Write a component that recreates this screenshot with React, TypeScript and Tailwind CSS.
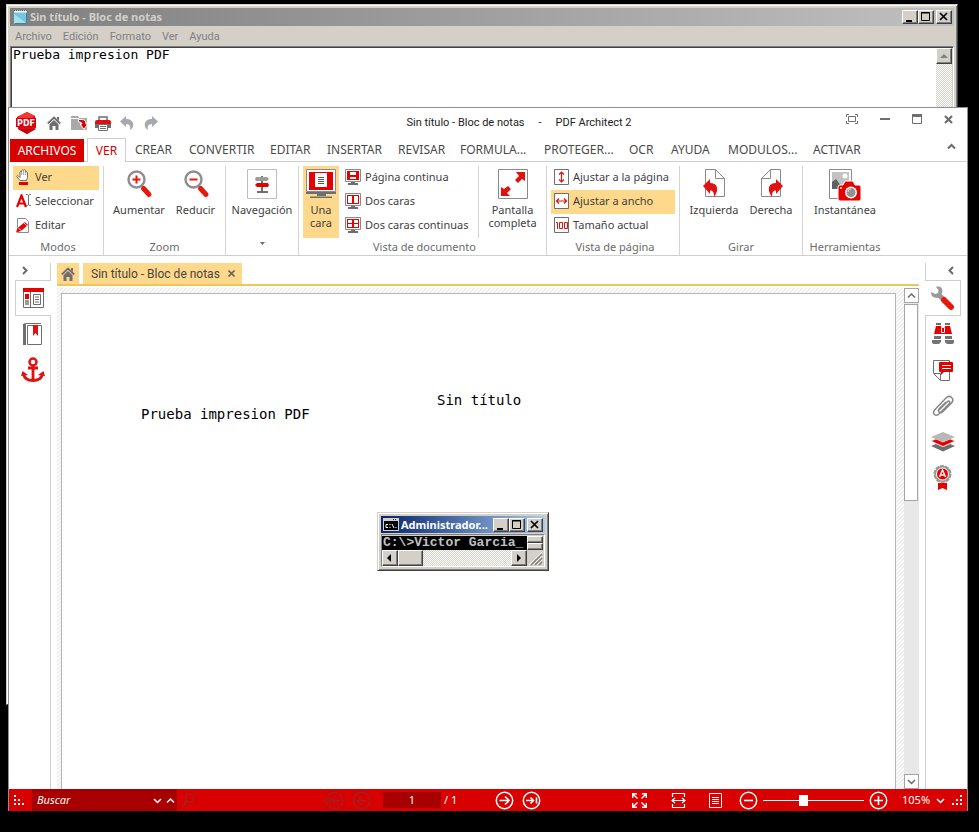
import React from "react";

type Kids = { children?: React.ReactNode };

const UI = "font-['Noto_Sans','Segoe_UI',sans-serif]";
const NARROW = "font-['Roboto','Tahoma',sans-serif]";
const RAISED =
  "bg-[#d4d0c8] border border-t-white border-l-white border-r-[#404040] border-b-[#404040] shadow-[inset_-1px_-1px_0_#808080]";
const CHECKER =
  "bg-[repeating-conic-gradient(#d4d0c8_0_25%,#ffffff_0_50%)] bg-[length:2px_2px]";

function Svg({ w, h, children }: Kids & { w: number; h: number }) {
  return (
    <svg width={w} height={h} viewBox={`0 0 ${w} ${h}`} fill="none" className="block shrink-0" aria-hidden="true">
      {children}
    </svg>
  );
}

function Chevron({ dir, color = "#6a6a6a", weight = 2 }: { dir: "up" | "down" | "left" | "right"; color?: string; weight?: number }) {
  const d = {
    up: "M1 6.5 4.5 3 8 6.5",
    down: "M1 3 4.5 6.5 8 3",
    left: "M6 1 2.5 4.5 6 8",
    right: "M3 1 6.5 4.5 3 8",
  }[dir];
  return (
    <Svg w={9} h={9}>
      <path d={d} stroke={color} strokeWidth={weight} />
    </Svg>
  );
}

/* ---------- classic window chrome ---------- */

function ClassicControls() {
  return (
    <div className="flex shrink-0 items-center">
      <button aria-label="Minimizar" className={`${RAISED} h-3.5 w-4`}>
        <Svg w={14} h={12}><path d="M3 9h6v2H3z" fill="#000" /></Svg>
      </button>
      <button aria-label="Maximizar" className={`${RAISED} h-3.5 w-4`}>
        <Svg w={14} h={12}><path d="M2.5 1.5h8v8h-8zM2 2h9" stroke="#000" /></Svg>
      </button>
      <button aria-label="Cerrar" className={`${RAISED} ml-0.5 h-3.5 w-4`}>
        <Svg w={14} h={12}><path d="m3 2 7 7m0-7-7 7" stroke="#000" strokeWidth="1.7" /></Svg>
      </button>
    </div>
  );
}

function Notepad() {
  return (
    <section
      aria-label="Bloc de notas"
      className="absolute top-1 right-[21px] bottom-[127px] left-1.5 flex flex-col border border-t-[#d4d0c8] border-r-[#404040] border-b-[#404040] border-l-[#d4d0c8] bg-[#d4d0c8] p-[3px] shadow-[inset_1px_1px_0_#fff,inset_-1px_-1px_0_#808080]"
    >
      <header className="flex h-[18px] items-center bg-linear-to-r from-[#808080] to-[#c0c0c0] pr-0.5 pl-[3px]">
        <Svg w={15} h={16}>
          <path d="M1 3h12l1 12H1z" fill="#74c7df" />
          <path d="m1 5 12 9H1z" fill="#a5e0ee" />
          <path d="M13.500 3v11.500H2" stroke="#477f97" />
          <path d="M1 2.5h13" stroke="#f4f6f6" strokeWidth="2" />
          <path d="M1 1.500h13" stroke="#58666b" strokeDasharray="1 1" />
        </Svg>
        <h1 className={`${UI} ml-0.5 flex-1 text-[11px] leading-4 font-bold text-[#d4d0c8]`}>
          Sin título - Bloc de notas
        </h1>
        <ClassicControls />
      </header>
      <nav className={`${NARROW} flex h-5 items-center gap-[11px] px-[5px] pt-0.5 text-[11px] leading-4 text-[#808080]`}>
        {["Archivo", "Edición", "Formato", "Ver", "Ayuda"].map((m) => (
          <button key={m}>{m}</button>
        ))}
      </nav>
      <div className="flex flex-1 border border-t-[#808080] border-r-white border-b-white border-l-[#808080] shadow-[inset_1px_1px_0_#404040]">
        <textarea
          aria-label="Texto"
          defaultValue="Prueba impresion PDF"
          className="m-px mr-0 flex-1 resize-none bg-white pl-px font-['DejaVu_Sans_Mono',monospace] text-[13px] leading-[14px] text-black outline-none"
        />
        <div className={`${CHECKER} mt-px mr-px w-4`}>
          <div className={`${RAISED} flex h-4 items-center justify-center`}>
            <Svg w={8} h={5}><path d="m0 4 4-4 4 4z" fill="#808080" /></Svg>
          </div>
        </div>
      </div>
    </section>
  );
}

function Console() {
  return (
    <section
      aria-label="Administrador"
      className="absolute top-[512px] left-[377px] flex h-[59px] w-[172px] flex-col border border-t-[#d4d0c8] border-r-[#404040] border-b-[#404040] border-l-[#d4d0c8] bg-[#d4d0c8] p-[3px] shadow-[inset_1px_1px_0_#fff,inset_-1px_-1px_0_#808080]"
    >
      <header className="flex h-[18px] items-center bg-linear-to-r from-[#0a246a] to-[#a6caf0] pr-0.5 pl-0.5">
        <Svg w={16} h={13}>
          <path d="M0 0h16v13H0z" fill="#d4d0c8" />
          <path d="M1 3h14v9H1z" fill="#000" />
          <path d="M5 6.500H3v3h2M7 6v1m0 2v1m2-4 2 4m2-1v1" stroke="#fff" />
          <path d="M10 1.500h1m1 0h1" stroke="#333" />
        </Svg>
        <h2 className={`${UI} ml-0.5 w-[93px] text-[11px] leading-4 font-bold whitespace-nowrap text-white`}>
          Administrador...
        </h2>
        <div className="ml-auto"><ClassicControls /></div>
      </header>
      <div className="mt-px flex flex-1 flex-col border border-t-[#808080] border-r-white border-b-white border-l-[#808080] pt-px pr-px">
        <div className="flex h-3.5">
          <pre className="flex-1 overflow-hidden bg-black pl-px font-['Liberation_Mono',monospace] text-[13px] leading-[14px] font-bold text-[#c0c0c0]">
            {"C:\\>Victor Garcia_"}
          </pre>
          <div className="flex w-4 shrink-0 flex-col">
            <div className={`${RAISED} h-[7px]`} />
            <div className={`${RAISED} h-[7px]`} />
          </div>
        </div>
        <div className={`${CHECKER} flex flex-1`}>
          <button aria-label="Izquierda" className={`${RAISED} w-4`}>
            <Svg w={14} h={14}><path d="M8 3v8L4 7z" fill="#000" /></Svg>
          </button>
          <div className={`${RAISED} w-[25px]`} />
          <button aria-label="Derecha" className={`${RAISED} ml-auto w-4`}>
            <Svg w={14} h={14}><path d="M5 3v8l4-4z" fill="#000" /></Svg>
          </button>
          <div className="w-4 bg-[#d4d0c8] pl-px">
            <Svg w={15} h={16}>
              <path d="M3 15 14 4m-7 11 7-7m-3 7 3-3" stroke="#808080" strokeWidth="1.500" />
              <path d="M1 15 14 2m-9 13 9-9m-5 9 5-5" stroke="#fff" />
            </Svg>
          </div>
        </div>
      </div>
    </section>
  );
}

/* ---------- icons of the PDF window ---------- */

const HomeIcon = () => (
  <Svg w={14} h={14}>
    <path d="M.8 7.500 7 1.500l6.200 6" stroke="#6e6e6e" strokeWidth="1.800" />
    <path d="M10 1h2v4l-2-2z" fill="#6e6e6e" />
    <path d="M2.500 8.300 7 4l4.500 4.300V14H8.500v-4h-3v4h-3z" fill="#6e6e6e" />
  </Svg>
);

const Logo = () => (
  <Svg w={22} h={22}>
    <path d="M12 0 20 4l1 12-9 6-9-5L2 5z" fill="#e30b13" />
    <path d="m2 5 10-5 8 4-8 4z" fill="#f23a35" />
    <path d="M3 17h18l-9 5z" fill="#c90009" />
    <path d="M1 6h20v9H1z" fill="#d9000b" />
    <text x="11" y="14" textAnchor="middle" fontFamily="DejaVu Sans" fontWeight="bold" fontSize="8" fill="#fff">PDF</text>
  </Svg>
);

const FolderIcon = () => (
  <Svg w={17} h={16}>
    <path d="M0 1h7l1.500 2H16v12H0z" fill="#a9a9a9" />
    <path d="M0 3.500h8" stroke="#fff" />
    <path d="M7.500 4.500H11q4 0 4 4.500h1.500L13 14.500 9 9h2q0-2-3.500-2z" fill="#d90008" stroke="#fff" />
  </Svg>
);

const PrinterIcon = () => (
  <Svg w={16} h={15}>
    <path d="M4 5V1h8v4" stroke="#6e6e6e" strokeWidth="1.500" />
    <path d="M0 8V6q0-2 2-2h12q2 0 2 2v2z" fill="#e30b13" />
    <path d="M0 8h16v4H0z" fill="#6e6e6e" />
    <path d="M3.500 8.500h9v6h-9zM5 10.500h6M5 12.500h6" fill="#fff" stroke="#6e6e6e" />
  </Svg>
);

const UndoIcon = ({ flip = false }: { flip?: boolean }) => (
  <Svg w={14} h={14}>
    <path
      d="M0 5.500 6 0v3c5 0 9 3 6.500 9L10 14c1-4-.5-6-4-6v3z"
      fill="#a5a9b0"
      transform={flip ? "translate(14 0) scale(-1 1)" : undefined}
    />
  </Svg>
);

const HandIcon = () => (
  <Svg w={14} h={16}>
    <path
      d="M4 11.500 1 8C.3 7 1.500 6 2.500 7L4 8.500V3q.800-1.400 1.600 0V1.500q1-1.400 2 0V1q1.200-1 2 .7V3q1.500-1 1.900.6V8.500L10.500 11.500z"
      fill="#fff"
      stroke="#6e6e6e"
    />
    <path d="M5.700 3v3m2-4.500V6m2-3.500V6" stroke="#8a8a8a" strokeWidth=".8" />
    <path d="M3 13h9v3H3z" fill="#e60000" />
  </Svg>
);

const SelectIcon = () => (
  <Svg w={15} h={14}>
    <path d="M1 13 5.500 1.500 10 13M2.500 9.500h6" stroke="#e60000" strokeWidth="2.200" />
    <path d="M10 .5h1.500l1 1 1-1H15M12.500 1v10M10 11.500h1.500l1-1 1 1H15" stroke="#6e6e6e" />
  </Svg>
);

const EditIcon = () => (
  <Svg w={14} h={15}>
    <path d="M1.500.5h8l3 3v11h-11z" stroke="#8a8a8a" fill="#fff" />
    <path d="M0 14.500 1.500 10 9 4l3 3-7 6z" fill="#e60000" />
    <path d="m8 5 3 3M2 9.500 5.500 13" stroke="#fff" strokeWidth=".8" />
  </Svg>
);

const ZoomIcon = ({ plus }: { plus?: boolean }) => (
  <Svg w={28} h={30}>
    <circle cx="11.500" cy="10.500" r="8" stroke="#8e8e8e" strokeWidth="2.400" fill="#fff" />
    <path d="m18.500 19.500 5.500 6" stroke="#e31b0c" strokeWidth="5" strokeLinecap="round" />
    <path d="M7.500 10.500h8" stroke="#e31b0c" strokeWidth="2" />
    {plus && <path d="M11.500 6.500v8" stroke="#e31b0c" strokeWidth="2" />}
  </Svg>
);

const NavIcon = () => (
  <Svg w={30} h={30}>
    <path d="M.5.5h29v29H.5z" stroke="#b9bdc4" fill="#fff" />
    <path d="M15 7v16M10 23h11" stroke="#6e6e6e" strokeWidth="2" />
    <path d="M9 8h11l2 2-2 2H9l-1-2z" fill="#9c9c9c" />
    <path d="M10 14h11l1 2-1 2H10l-2-2z" fill="#e60000" />
  </Svg>
);

const BigMonitor = () => (
  <Svg w={30} h={29}>
    <path d="M.5.5h29v22H.5z" fill="#fff" stroke="#8a8a8a" />
    <path d="M3 3h24v18H3z" fill="#e60000" />
    <path d="M9 4h12v14H9z" fill="#fff" />
    <path d="M12 8.500h6m-6 2h6m-6 2h6m-6 2h6" stroke="#555" />
    <path d="M0 23h30v2H0zM11 25h9v2h-9zM4 27.500h22V29H4z" fill="#6e6e6e" />
  </Svg>
);

const Monitor = ({ kind }: { kind: "cont" | "two" | "twocont" }) => (
  <Svg w={16} h={16}>
    <path d="M.5.5h15v12H.5z" fill="#fff" stroke="#8a8a8a" />
    <path d="M2 2h12v9H2z" fill="#e60000" />
    {kind === "cont" && <path d="M5 3h6v3H5zm0 5h6v2H5z" fill="#fff" />}
    {kind === "two" && <path d="M3 3h4v7H3zm6 0h4v7H9z" fill="#fff" />}
    {kind === "twocont" && <path d="M3 3h4v3H3zm6 0h4v3H9zM3 7h4v3H3zm6 0h4v3H9z" fill="#fff" />}
    <path d="M6 13h4v1H6zM3 14h10v2H3z" fill="#6e6e6e" />
  </Svg>
);

const FullIcon = () => (
  <Svg w={30} h={30}>
    <path d="M.5.500h29v29H.5z" stroke="#8a8a8a" fill="#fff" />
    <path d="M18 3h9v9l-3-2-4 4-3-3 4-4zM12 27H3v-9l3 2 4-3 3 3-4 4z" fill="#e31010" />
  </Svg>
);

const FitIcon = ({ kind }: { kind: "page" | "width" | "actual" }) => (
  <Svg w={15} h={16}>
    <path d="M.5.5h14v15H.5z" stroke="#6e6e6e" fill="#fff" />
    {kind === "page" && <path d="M7.500 3v10M5 5.500 7.500 3 10 5.500M5 10.500 7.500 13l2.500-2.500" stroke="#e31010" strokeWidth="1.200" />}
    {kind === "width" && <path d="M2.500 8h10M5 5.500 2.500 8 5 10.500M10 5.500 12.500 8 10 10.500" stroke="#e31010" strokeWidth="1.200" />}
    {kind === "actual" && <path d="M2 5.500h1.500V12M5.500 5.500h3v6h-3zm5 0h3v6h-3z" stroke="#e31010" />}
  </Svg>
);

const RotateIcon = ({ flip = false }: { flip?: boolean }) => (
  <Svg w={23} h={29}>
    <g transform={flip ? "translate(23 0) scale(-1 1)" : undefined}>
      <path d="M2.500.5h10l9 9v18h-19z" fill="#fff" stroke="#8a8a8a" />
      <path d="M12.500.5v9h9" stroke="#8a8a8a" />
      <path d="M0 17 7 10v4c7 0 10 6 4 14 0-5-1-6.500-4-6.500V25z" fill="#e31010" />
    </g>
  </Svg>
);

const SnapshotIcon = () => (
  <Svg w={34} h={33}>
    <path d="M1.500.5h22v29h-22z" fill="#fff" stroke="#8a8a8a" />
    <path d="M4 3h17v17H4z" fill="#c2c2c2" />
    <circle cx="17" cy="7" r="2.500" fill="#fff" />
    <path d="m4 13 4-3 5 7 3-2v5H4z" fill="#5e6266" />
    <path d="M10 18q0-2 2-2h3l2-4h8l2 4h4q2 0 2 2v12q0 2-2 2H12q-2 0-2-2z" fill="#e60000" stroke="#fff" />
    <circle cx="23" cy="23.500" r="6" fill="#fff" />
    <circle cx="23" cy="23.500" r="4.500" fill="#929292" />
    <path d="M20 23q0-3 3-3" stroke="#ddd" />
    <path d="M12 19h2" stroke="#fff" strokeWidth="1.500" />
  </Svg>
);

/* ---------- ribbon ---------- */

function Tool({ icon, label, active, className }: { icon: React.ReactNode; label: string; active?: boolean; className: string }) {
  return (
    <button className={`flex h-6 items-center gap-1 pb-0.5 text-left leading-4 whitespace-nowrap ${active ? "bg-[#fed98b]" : ""} ${className}`}>
      <span className="flex w-4 justify-center">{icon}</span>
      {label}
    </button>
  );
}

function BigTool({ icon, lines, className = "" }: { icon: React.ReactNode; lines: string[]; className?: string }) {
  return (
    <button className={`flex h-[72px] flex-col items-center pt-[3px] leading-[13px] ${className}`}>
      <span className="flex h-[34px] items-start justify-center">{icon}</span>
      {lines.map((line) => (
        <span key={line} className="block h-[13px]">{line}</span>
      ))}
    </button>
  );
}

function Group({ label, className, children }: Kids & { label: React.ReactNode; className: string }) {
  return (
    <div className={`flex shrink-0 flex-col ${className}`}>
      <div className="flex h-[72px]">{children}</div>
      <div className="flex h-[18px] items-end justify-center leading-4 text-[#6b6b6b]">{label}</div>
    </div>
  );
}

const DIVIDED = "border-r border-[#d4d4d4]";

function Ribbon() {
  return (
    <div className="flex h-[94px] overflow-hidden border-b border-[#cfcfcf] pt-1 text-[11px] text-[#3f3f3f]">
      <Group label="Modos" className={`w-[95px] pl-1 ${DIVIDED}`}>
        <div className="flex flex-col">
          <Tool icon={<HandIcon />} label="Ver" active className="w-[86px] pl-0.5" />
          <Tool icon={<SelectIcon />} label="Seleccionar" className="w-[86px] pl-0.5" />
          <Tool icon={<EditIcon />} label="Editar" className="w-[86px] pl-0.5" />
        </div>
      </Group>
      <Group label="Zoom" className={`w-[122px] px-1 ${DIVIDED}`}>
        <BigTool icon={<ZoomIcon plus />} lines={["Aumentar"]} className="w-[62px]" />
        <BigTool icon={<ZoomIcon />} lines={["Reducir"]} className="flex-1" />
      </Group>
      <Group
        label={<span className="pb-2.5"><Svg w={5} h={3}><path d="M0 0h5L2.500 3z" fill="#6e6e6e" /></Svg></span>}
        className={`w-[73px] ${DIVIDED}`}
      >
        <BigTool icon={<NavIcon />} lines={["Navegación"]} className="w-full" />
      </Group>
      <Group label="Vista de documento" className={`w-[248px] pl-1 ${DIVIDED}`}>
        <BigTool icon={<BigMonitor />} lines={["Una", "cara"]} className="w-9 bg-[#fed98b]" />
        <div className={`flex w-[140px] flex-col pl-1.5 ${DIVIDED}`}>
          <Tool icon={<Monitor kind="cont" />} label="Página continua" className="w-full" />
          <Tool icon={<Monitor kind="two" />} label="Dos caras" className="w-full" />
          <Tool icon={<Monitor kind="twocont" />} label="Dos caras continuas" className="w-full" />
        </div>
        <BigTool icon={<FullIcon />} lines={["Pantalla", "completa"]} className="flex-1" />
      </Group>
      <Group label="Vista de página" className={`w-[133px] pl-1 ${DIVIDED}`}>
        <div className="flex flex-col">
          <Tool icon={<FitIcon kind="page" />} label="Ajustar a la página" className="w-[124px] pl-0.5" />
          <Tool icon={<FitIcon kind="width" />} label="Ajustar a ancho" active className="w-[124px] pl-0.5" />
          <Tool icon={<FitIcon kind="actual" />} label="Tamaño actual" className="w-[124px] pl-0.5" />
        </div>
      </Group>
      <Group label="Girar" className={`w-[123px] px-1 ${DIVIDED}`}>
        <BigTool icon={<RotateIcon />} lines={["Izquierda"]} className="w-[60px]" />
        <BigTool icon={<RotateIcon flip />} lines={["Derecha"]} className="flex-1" />
      </Group>
      <Group label="Herramientas" className="w-[84px]">
        <BigTool icon={<SnapshotIcon />} lines={["Instantánea"]} className="w-full" />
      </Group>
    </div>
  );
}

const TABS: [string, string][] = [
  ["CREAR", "w-[54px]"],
  ["CONVERTIR", "w-[81px]"],
  ["EDITAR", "w-[57px]"],
  ["INSERTAR", "w-[71px]"],
  ["REVISAR", "w-[62px]"],
  ["FORMULA...", "w-[84px]"],
  ["PROTEGER...", "w-[85px]"],
  ["OCR", "w-[42px]"],
  ["AYUDA", "w-[57px]"],
  ["MODULOS...", "w-[85px]"],
  ["ACTIVAR", "w-[66px]"],
];

function TitleBar() {
  return (
    <header className="grid h-[30px] grid-cols-[1fr_auto_1fr] items-center">
      <div className="flex items-center gap-2.5 pl-1.5">
        <Logo />
        <button aria-label="Inicio"><HomeIcon /></button>
        <button aria-label="Abrir"><FolderIcon /></button>
        <button aria-label="Imprimir" className="-ml-[3px]"><PrinterIcon /></button>
        <button aria-label="Deshacer" className="-ml-px"><UndoIcon /></button>
        <button aria-label="Rehacer"><UndoIcon flip /></button>
      </div>
      <div className={`${NARROW} flex gap-3.5 pb-px pl-[62px] text-[11px] leading-4 text-[#222]`}>
        <span>Sin título - Bloc de notas</span>
        <span>-</span>
        <span>PDF Architect 2</span>
      </div>
      <div className="flex items-center justify-end gap-[22px] pr-3.5 pb-2">
        <button aria-label="Pantalla completa">
          <Svg w={12} h={10}>
            <path d="M3 .5H.5V3M9 .5h2.500V3M3 9.500H.5V7M9 9.500h2.500V7M2.500 2.500h7v5h-7z" stroke="#6e6e6e" />
          </Svg>
        </button>
        <button aria-label="Minimizar"><Svg w={10} h={10}><path d="M0 4h10v2H0z" fill="#6e6e6e" /></Svg></button>
        <button aria-label="Maximizar"><Svg w={10} h={10}><path d="M.5.5h9v9H.5z" stroke="#6e6e6e" /><path d="M0 0h10v3H0z" fill="#6e6e6e" /></Svg></button>
        <button aria-label="Cerrar"><Svg w={9} h={9}><path d="m1 1 7 7m0-7L1 8" stroke="#6e6e6e" strokeWidth="2.200" /></Svg></button>
      </div>
    </header>
  );
}

function TabBar() {
  return (
    <nav className="flex h-6 items-stretch text-xs leading-4 text-[#4a4a4a] shadow-[inset_0_-1px_0_#cfcfcf]">
      <button className="mr-[3px] ml-px w-[74px] border-t border-white bg-[#d80000] text-white">ARCHIVOS</button>
      <button className="w-[39px] border border-b-0 border-[#cfcfcf] bg-white text-[#d80000]">VER</button>
      {TABS.map(([name, width]) => (
        <button key={name} className={`shrink-0 pl-[9px] text-left whitespace-nowrap ${width}`}>{name}</button>
      ))}
      <button aria-label="Contraer" className="mr-[11px] mb-2 ml-auto"><Chevron dir="up" /></button>
    </nav>
  );
}

/* ---------- side panels ---------- */

const ThumbsIcon = () => (
  <Svg w={21} h={20}>
    <path d="M.5 3.500h20v16H.5zM7.500 4v15" stroke="#6e6e6e" fill="#fff" />
    <path d="M0 0h21v4H0zM2 6h4v5H2z" fill="#e60000" />
    <path d="M2 12h4v5H2z" fill="#9a9a9a" />
    <path d="M10.500 6.500h7v10h-7zM12 9h4m-4 2.500h4M12 14h4" stroke="#6e6e6e" />
  </Svg>
);
const BookIcon = () => (
  <Svg w={20} h={23}>
    <path d="M.5 2.500q0-2 2-2H18" stroke="#6e6e6e" />
    <path d="M4.500 2.500h14v19h-14z" stroke="#6e6e6e" fill="#fff" />
    <path d="M1.500 1v21" stroke="#6e6e6e" strokeWidth="3" />
    <path d="M10 2h5v11l-2.500-3-2.500 3z" fill="#e31010" />
  </Svg>
);
const AnchorIcon = () => (
  <Svg w={24} h={26}>
    <circle cx="12" cy="5" r="3.500" stroke="#e31010" strokeWidth="2.500" />
    <path d="M12 8.500V23M7 11h10M2.500 17c1 5 5 6.500 9.500 6.500S20.500 22 21.500 17" stroke="#e31010" strokeWidth="2.800" />
    <path d="M0 19 1.500 14 7 18zM24 19l-1.500-5L17 18z" fill="#e31010" />
  </Svg>
);
const WrenchIcon = () => (
  <Svg w={25} h={25}>
    <path d="m8 8 5 5" stroke="#9a9a9a" strokeWidth="5" />
    <path d="m14 14 7 7" stroke="#e31b0c" strokeWidth="6" strokeLinecap="round" />
    <path d="M6 1c5-2 8 3 5.500 7L9 11.500C5 13 0 10 1.500 6L5 8l3-1 .5-3z" fill="#9a9a9a" />
  </Svg>
);
const BinocularsIcon = () => (
  <Svg w={22} h={22}>
    <path d="M4 0h5v2H4zm9 0h5v2h-5z" fill="#6e6e6e" />
    <path d="M4 3h5v1h4V3h5l2 8H2z" fill="#e60000" />
    <path d="M9.500 4.500h3v5h-3z" stroke="#fff" />
    <path d="M2 13h7v3H2zm11 0h7v3h-7zM0 17h9v2q-1 2-3 2H3q-3 0-3-2zm13 0h9v2q0 2-3 2h-3q-2 0-3-2z" fill="#747474" />
  </Svg>
);
const CommentIcon = () => (
  <Svg w={22} h={23}>
    <path d="M1.500 1.500h16v20h-9l-7-7zM2 14.500h6.500V21" stroke="#6e6e6e" fill="#fff" />
    <path d="M8 3h12q1 0 1 1v8q0 1-1 1h-8l-3 3v-3H8q-1 0-1-1V4q0-1 1-1z" fill="#e60000" />
    <path d="M10 6.500h9m-9 3h9" stroke="#fff" />
  </Svg>
);
const ClipIcon = () => (
  <Svg w={22} h={22}>
    <path d="m7 15 8-8c2-2 4 0 2 2l-9.500 9.500c-4 4-8 0-4.500-4L14 3c4-4 9 1 5.500 5L11 16.500c-3 3-6 0-3.500-3L14 7" stroke="#858585" strokeWidth="1.500" />
  </Svg>
);
const LayersIcon = () => (
  <Svg w={24} h={20}>
    <path d="m0 14 5-2 7 3 7-3 5 2-12 5.500z" fill="#6e6e6e" />
    <path d="m0 9 5-2 7 3 7-3 5 2-12 5.500z" fill="#e60000" stroke="#fff" strokeWidth=".6" />
    <path d="m0 5 12-5 12 5-12 5z" fill="#b8b8b8" />
  </Svg>
);
const SealIcon = () => (
  <Svg w={19} h={26}>
    <path d="M5 18h9v7l-4.500-2L5 25z" fill="#e60000" />
    <circle cx="9.500" cy="9" r="8" fill="#999" stroke="#999" strokeWidth="2" strokeDasharray="4 1" />
    <circle cx="9.500" cy="9" r="6" fill="#e60000" stroke="#fff" />
    <path d="m6.500 12 3-7 3 7M7.500 10h4" stroke="#fff" strokeWidth="1.400" />
  </Svg>
);

function SideButton({ label, children, className = "" }: Kids & { label: string; className?: string }) {
  return (
    <button aria-label={label} className={`flex h-9 w-full items-center justify-center ${className}`}>{children}</button>
  );
}

function LeftPanel() {
  return (
    <aside className="flex w-9 shrink-0 flex-col">
      <button aria-label="Expandir" className="mt-[7px] h-[17px] border-r border-[#cfcfcf] pb-0.5 pl-[5px]"><Chevron dir="right" /></button>
      <SideButton label="Miniaturas" className="border border-r-0 border-[#cfcfcf]"><ThumbsIcon /></SideButton>
      <div className="flex flex-1 flex-col border-r border-[#cfcfcf]">
        <SideButton label="Marcadores"><BookIcon /></SideButton>
        <SideButton label="Destinos"><AnchorIcon /></SideButton>
      </div>
    </aside>
  );
}

function RightPanel() {
  return (
    <aside className="mr-1.5 flex w-9 shrink-0 flex-col">
      <button aria-label="Expandir" className="mt-[7px] flex h-[17px] items-center justify-end border-l border-[#cfcfcf] pr-[5px] pb-0.5"><Chevron dir="left" /></button>
      <SideButton label="Herramientas" className="border border-l-0 border-[#cfcfcf]"><WrenchIcon /></SideButton>
      <div className="flex flex-1 flex-col border-l border-[#cfcfcf] pr-0.5">
        <SideButton label="Buscar"><BinocularsIcon /></SideButton>
        <SideButton label="Comentarios"><CommentIcon /></SideButton>
        <SideButton label="Adjuntos"><ClipIcon /></SideButton>
        <SideButton label="Capas"><LayersIcon /></SideButton>
        <SideButton label="Firmas"><SealIcon /></SideButton>
      </div>
    </aside>
  );
}

function DocumentArea() {
  return (
    <main className="mx-1.5 flex min-w-0 flex-1 flex-col pt-[7px]">
      <div className="flex h-[23px] shrink-0 items-stretch gap-1 border-b-2 border-[#f2c45c] leading-4 text-[#444]">
        <button aria-label="Inicio" className="flex w-[22px] items-center justify-center bg-[#fed98b]"><HomeIcon /></button>
        <button className={`${NARROW} flex w-[159px] items-center justify-between bg-[#fed98b] pr-[7px] pl-2 text-xs leading-4 whitespace-nowrap`}>
          Sin título - Bloc de notas
          <Svg w={7} h={7}><path d="m.500.500 6 6m0-6-6 6" stroke="#666" strokeWidth="1.600" /></Svg>
        </button>
      </div>
      <div className="mt-0.5 flex min-h-0 flex-1">
        <div className="flex min-w-0 flex-1 bg-[linear-gradient(135deg,#ececec_25%,#ffffff_25%_50%,#ececec_50%_75%,#ffffff_75%)] bg-[length:4px_4px] px-1 pt-[5px] pr-2">
          <article className="flex flex-1 items-start border border-b-0 border-[#b5b5b5] bg-white font-['DejaVu_Sans_Mono',monospace] text-sm leading-4 whitespace-nowrap text-black">
            <p className="mt-28 ml-[79px] w-[296px]">Prueba impresion PDF</p>
            <p className="mt-[98px]">Sin título</p>
          </article>
        </div>
        <div className="flex w-[15px] flex-col bg-[#e8e8e8]">
          <button aria-label="Subir" className="flex h-[15px] items-center justify-center border border-[#a5a5a5] bg-white"><Chevron dir="up" weight={1.5} /></button>
          <div className="mt-px h-[197px] w-3.5 border border-[#a5a5a5] bg-white" />
          <button aria-label="Bajar" className="mt-auto flex h-[15px] items-center justify-center border border-[#a5a5a5] bg-white"><Chevron dir="down" weight={1.5} /></button>
        </div>
      </div>
    </main>
  );
}

/* ---------- status bar ---------- */

function Round({ label, d, dim }: { label: string; d: string; dim?: boolean }) {
  return (
    <button aria-label={label} disabled={dim}>
      <Svg w={19} h={19}>
        <circle cx="9.500" cy="9.500" r="8.200" stroke={dim ? "#a32020" : "#fff"} strokeWidth="1.500" />
        <path d={d} stroke={dim ? "#a32020" : "#fff"} strokeWidth="1.600" />
      </Svg>
    </button>
  );
}

function StatusBar() {
  return (
    <footer className="flex h-[22px] shrink-0 items-center bg-[#d80000] text-[11px] leading-4 text-white">
      <div className="w-[23px] pl-[5px]">
        <Svg w={10} h={10}><path d="M0 0h2v2H0zm0 4h2v2H0zm0 4h2v2H0zm4-4h2v2H4zm0 4h2v2H4zm4 0h2v2H8z" fill="#fff" /></Svg>
      </div>
      <div className="flex h-full w-[145px] items-center gap-1 bg-[#a80000] pr-0.5 pl-[5px]">
        <input aria-label="Buscar" placeholder="Buscar" className="min-w-0 flex-1 bg-transparent italic outline-none placeholder:text-white" />
        <button aria-label="Siguiente"><Chevron dir="down" color="#fff" weight={1.5} /></button>
        <button aria-label="Anterior"><Chevron dir="up" color="#fff" weight={1.5} /></button>
      </div>
      <div className="w-[148px] pl-1">
        <Svg w={14} h={15}><circle cx="8.500" cy="5" r="4" stroke="#a32020" strokeWidth="1.500" /><path d="m6 8-5 6" stroke="#a32020" strokeWidth="2.200" /></Svg>
      </div>
      <div className="flex items-center gap-2">
        <Round label="Primera" dim d="M4.500 6.500v6M15 9.500H7.500m3-3-3 3 3 3" />
        <Round label="Anterior" dim d="M14 9.500H5.500m4-4-4 4 4 4" />
      </div>
      <input aria-label="Página" defaultValue="1" className="ml-3 h-4 w-[58px] bg-[#a80000] text-center outline-none" />
      <span className="ml-[3px] w-[51px]">/ 1</span>
      <div className="flex items-center gap-2">
        <Round label="Siguiente" d="M4.500 9.500H14m-4-4 4 4-4 4" />
        <Round label="Última" d="M14.500 6.500v6M4 9.500h7.500m-3-3 3 3-3 3" />
      </div>
      <div className="ml-auto flex items-center">
        <button aria-label="Pantalla completa" className="mr-6">
          <Svg w={15} h={15}><path d="M.7 5V.700H5M.7.700 5.500 5.500M10 .700h4.300V5m0-4.300L9.500 5.500M.7 10v4.300H5m-4.300 0 4.800-4.800M10 14.300h4.300V10m0 4.300L9.500 9.500" stroke="#fff" strokeWidth="1.400" /></Svg>
        </button>
        <button aria-label="Ajustar a ancho" className="mr-[23px]">
          <Svg w={15} h={15}><path d="M1.500 4V.5h12V4M1.500 11v3.500h12V11M1 7.500h13M4 5 1 7.500 4 10M11 5l3 2.500-3 2.500" stroke="#fff" strokeWidth="1.200" /></Svg>
        </button>
        <button aria-label="Ajustar a página" className="mr-[17px]">
          <Svg w={13} h={15}><path d="M.5.5h12v14H.5zM3 4.500h7m-7 2h7m-7 2h7m-7 2h7" stroke="#fff" /></Svg>
        </button>
        <Round label="Reducir" d="M5 9.500h9" />
        <input
          type="range"
          aria-label="Zoom"
          min={0}
          max={100}
          defaultValue={39}
          className="mx-[5px] h-4 w-[101px] appearance-none bg-transparent [&::-webkit-slider-runnable-track]:h-px [&::-webkit-slider-runnable-track]:bg-white [&::-webkit-slider-thumb]:-mt-[5px] [&::-webkit-slider-thumb]:h-[11px] [&::-webkit-slider-thumb]:w-[9px] [&::-webkit-slider-thumb]:appearance-none [&::-webkit-slider-thumb]:bg-white"
        />
        <Round label="Aumentar" d="M5 9.500h9M9.500 5v9" />
        <button className="ml-3.5 flex items-center gap-[3px]">
          <span className="w-[31px] text-left">105%</span>
          <Chevron dir="down" color="#fff" weight={1.5} />
        </button>
        <div className="mr-[5px] ml-[7px]">
          <Svg w={10} h={10}><path d="M8 0h2v2H8zm0 4h2v2H8zm0 4h2v2H8zM4 4h2v2H4zm0 4h2v2H4zM0 8h2v2H0z" fill="#fff" /></Svg>
        </div>
      </div>
    </footer>
  );
}

function PdfArchitect() {
  return (
    <section
      aria-label="PDF Architect"
      className={`${UI} absolute top-[107px] right-[11px] bottom-[21px] left-2 flex flex-col border border-b-0 border-[#8f8f8f] bg-white`}
    >
      <TitleBar />
      <TabBar />
      <Ribbon />
      <div className="flex min-h-0 flex-1 pl-1.5">
        <LeftPanel />
        <DocumentArea />
        <RightPanel />
      </div>
      <StatusBar />
    </section>
  );
}

export default function App() {
  return (
    <div className="relative h-screen overflow-hidden bg-black">
      <Notepad />
      <PdfArchitect />
      <Console />
    </div>
  );
}
